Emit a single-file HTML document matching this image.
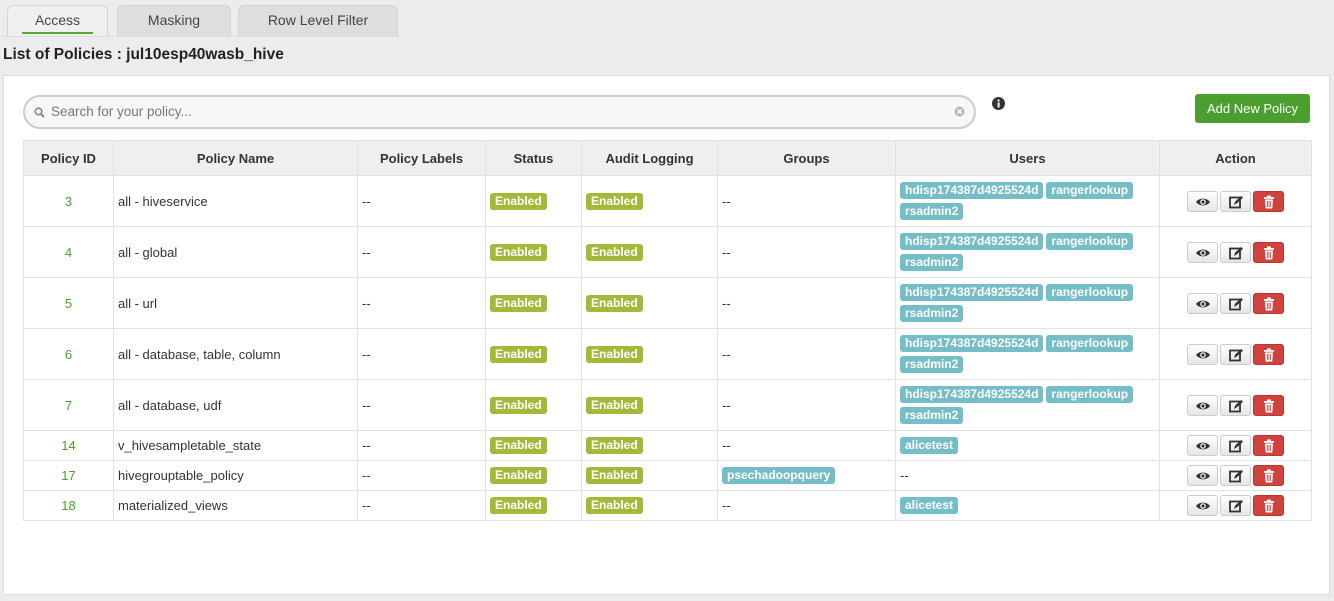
<!DOCTYPE html>
<html><head><style>
*{box-sizing:border-box}
body{margin:0;width:1334px;height:601px;background:#ececec;font-family:"Liberation Sans",sans-serif;font-size:13px;color:#333;position:relative;overflow:hidden}
.tab{position:absolute;top:5px;height:32px;border:1px solid #d4d4d4;border-bottom:none;border-radius:6px 6px 0 0;background:#dedede;text-align:center;line-height:28px;font-size:14px;color:#444}
.title{position:absolute;left:3px;top:46px;font-size:15.5px;font-weight:bold;color:#222}
.panel{position:absolute;left:3px;top:75px;width:1327px;height:520px;background:#fff;border:1px solid #ddd}
.search{position:absolute;left:23px;top:95px;width:953px;height:34px;border:2px solid #ccc;border-radius:17px;background:#f7f7f7;color:#777;font-size:13.5px;line-height:30px;padding-left:26px}
.add{position:absolute;left:1195px;top:94px;width:115px;height:29px;background:#4a9f2e;border-radius:3px;color:#fff;text-align:center;line-height:29px;font-size:13px}
table{position:absolute;left:23px;top:140px;border-collapse:collapse;table-layout:fixed;width:1288px}
td,th{border:1px solid #e2e2e2;padding:0 4px;vertical-align:middle}
th{background:#efefef;height:35px;font-size:13px;color:#333}
td.c{text-align:center}
td.id{text-align:center;color:#4a9f2e}
.g{display:inline-block;background:#a4b83a;color:#fff;font-weight:bold;font-size:12px;padding:0 5px;height:17px;line-height:17px;border-radius:3px}
.b{display:inline-block;background:#75bec7;color:#fff;font-weight:bold;font-size:12px;padding:0 5px;height:17px;line-height:17px;border-radius:3px;margin:2px 3px 2px 0}
.btn{display:inline-block;width:31px;height:21px;border:1px solid #ccc;border-radius:3px;background:linear-gradient(#fff,#e6e6e6);vertical-align:middle;margin:0 1px;position:relative}
.btn.r{background:#d0423d;border-color:#b33}
.btn svg{position:absolute;left:7px;top:3px}
</style></head><body>
<div class="tab" style="left:7px;width:101px;background:#f0f0f0">Access<div style="position:absolute;left:14px;right:14px;top:26px;height:2px;background:#5aa834"></div></div>
<div class="tab" style="left:117px;width:114px">Masking</div>
<div class="tab" style="left:238px;width:160px">Row Level Filter</div>
<div style="position:absolute;left:0;top:36px;width:400px;height:1px;background:#ddd"></div>
<div class="title">List of Policies : jul10esp40wasb_hive</div>
<div class="panel"></div>
<div class="search"><svg style="position:absolute;left:9px;top:10px" width="11" height="11" viewBox="0 0 11 11"><circle cx="4.5" cy="4.5" r="3.3" stroke="#888" stroke-width="1.6" fill="none"/><path d="M7 7l3 3" stroke="#888" stroke-width="2"/></svg>Search for your policy...<svg style="position:absolute;right:9px;top:9px" width="11" height="11"><circle cx="5.5" cy="5.5" r="5" fill="#bbb"/><path d="M3.5 3.5l4 4M7.5 3.5l-4 4" stroke="#fff" stroke-width="1.3"/></svg></div>
<svg style="position:absolute;left:992px;top:97px" width="13" height="13"><circle cx="6.5" cy="6.5" r="6.5" fill="#333"/><rect x="5.6" y="5.5" width="2" height="5" fill="#fff"/><circle cx="6.6" cy="3.5" r="1.1" fill="#fff"/></svg>
<div class="add">Add New Policy</div>
<table>
<colgroup><col style="width:90px"><col style="width:244px"><col style="width:128px"><col style="width:96px"><col style="width:136px"><col style="width:178px"><col style="width:264px"><col style="width:152px"></colgroup>
<tr><th>Policy ID</th><th>Policy Name</th><th>Policy Labels</th><th>Status</th><th>Audit Logging</th><th>Groups</th><th>Users</th><th>Action</th></tr>
<tbody id="tb"></tbody>
</table>
<script>
var rows=[["3","all - hiveservice",1],["4","all - global",1],["5","all - url",1],["6","all - database, table, column",1],["7","all - database, udf",1],["14","v_hivesampletable_state",2],["17","hivegrouptable_policy",3],["18","materialized_views",2]];
var act='<span class="btn"><svg width="16" height="14" viewBox="0 0 16 14"><path d="M1 7C4 2.5 12 2.5 15 7C12 11.5 4 11.5 1 7Z" fill="#333"/><circle cx="8" cy="7" r="2.8" fill="#fff"/><circle cx="8" cy="7" r="1.6" fill="#333"/></svg></span><span class="btn"><svg width="16" height="14" viewBox="0 0 16 14"><rect x="2" y="2.5" width="10" height="10" fill="none" stroke="#333" stroke-width="1.8"/><path d="M6 10l1.2-3.5 6-5.5 1.8 1.8-6 5.5z" fill="#333"/></svg></span><span class="btn r"><svg width="16" height="14" viewBox="0 0 16 14"><rect x="3" y="2" width="10" height="1.8" fill="#fff"/><rect x="6" y="0.5" width="4" height="2" fill="#fff"/><path d="M4 4.5h8l-.7 9h-6.6z" fill="#fff"/><path d="M6.5 6v6M8 6v6M9.5 6v6" stroke="#d0423d" stroke-width=".8"/></svg></span>';
var h='';rows.forEach(function(r){var t=r[2];var ht=t==1?51:30;
var users=t==1?'<span class="b">hdisp174387d4925524d</span><span class="b">rangerlookup</span><br><span class="b">rsadmin2</span>':t==2?'<span class="b">alicetest</span>':'--';
var groups=t==3?'<span class="b">psechadoopquery</span>':'--';
h+='<tr style="height:'+ht+'px"><td class="id">'+r[0]+'</td><td>'+r[1]+'</td><td>--</td><td><span class="g">Enabled</span></td><td><span class="g">Enabled</span></td><td>'+groups+'</td><td>'+users+'</td><td class="c">'+act+'</td></tr>';});
document.getElementById('tb').innerHTML=h;
</script>
</body></html>
